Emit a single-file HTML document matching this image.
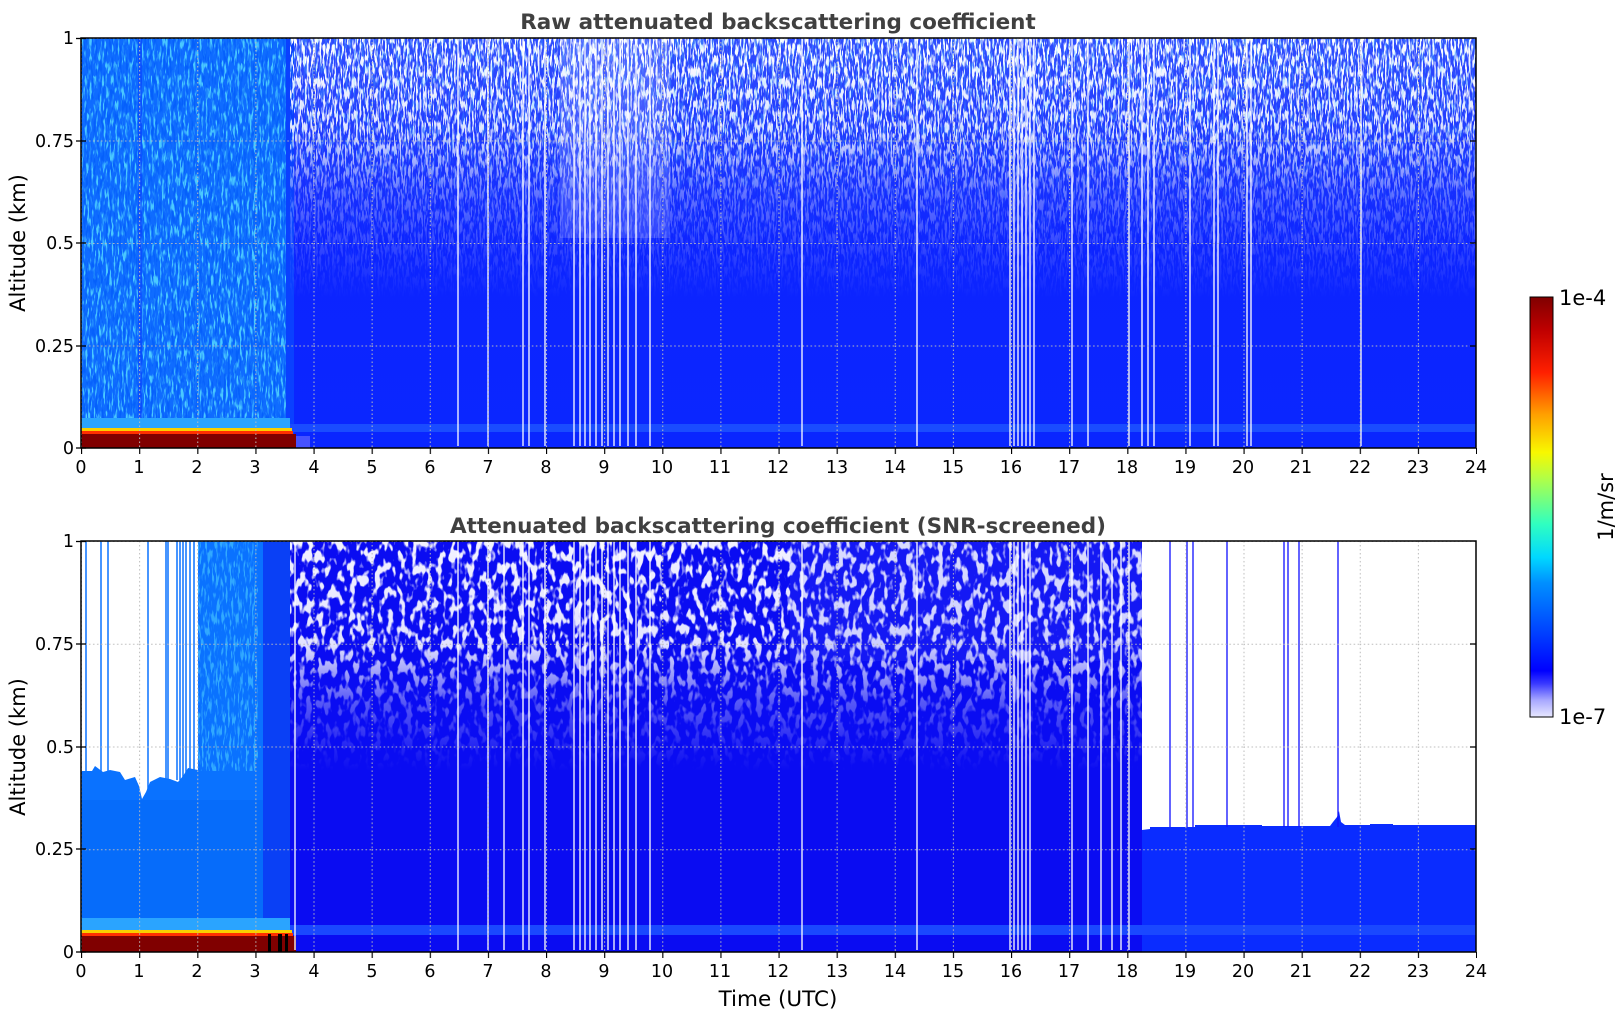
<!DOCTYPE html>
<html><head><meta charset="utf-8"><style>
html,body{margin:0;padding:0;background:#fff;}
svg{display:block;font-family:"DejaVu Sans","Liberation Sans",sans-serif;}
</style></head><body>
<svg width="1621" height="1020" viewBox="0 0 1621 1020" xmlns="http://www.w3.org/2000/svg">
<defs>
  <filter id="wn1" x="0" y="0" width="100%" height="100%">
    <feTurbulence type="fractalNoise" baseFrequency="0.55 0.09" numOctaves="2" seed="5"/>
    <feColorMatrix type="matrix" values="0 0 0 0 1  0 0 0 0 1  0 0 0 0 1  9 0 0 0 -4.3"/>
  </filter>
  <filter id="cn1" x="0" y="0" width="100%" height="100%">
    <feTurbulence type="fractalNoise" baseFrequency="0.5 0.08" numOctaves="2" seed="11"/>
    <feColorMatrix type="matrix" values="0 0 0 0 0.1  0 0 0 0 0.75  0 0 0 0 1  8 0 0 0 -4.2"/>
  </filter>
  <filter id="bn1" x="0" y="0" width="100%" height="100%">
    <feTurbulence type="fractalNoise" baseFrequency="0.5 0.08" numOctaves="2" seed="21"/>
    <feColorMatrix type="matrix" values="0 0 0 0 0  0 0 0 0 0.1  0 0 0 0 0.95  8 0 0 0 -4.0"/>
  </filter>
  <filter id="wn2" x="0" y="0" width="100%" height="100%">
    <feTurbulence type="fractalNoise" baseFrequency="0.16 0.08" numOctaves="2" seed="8"/>
    <feColorMatrix type="matrix" values="0 0 0 0 0.9  0 0 0 0 0.9  0 0 0 0 1  8 0 0 0 -4.0"/>
  </filter>
  <linearGradient id="gm1" x1="0" y1="0" x2="0" y2="1">
    <stop offset="0" stop-color="#fff"/><stop offset="0.35" stop-color="#ddd"/><stop offset="0.6" stop-color="#555"/><stop offset="1" stop-color="#000"/>
  </linearGradient>
  <mask id="m1"><rect x="290" y="38" width="1186" height="260" fill="url(#gm1)"/></mask>
  <linearGradient id="gm2" x1="0" y1="0" x2="0" y2="1">
    <stop offset="0" stop-color="#fff"/><stop offset="0.45" stop-color="#eee"/><stop offset="0.7" stop-color="#555"/><stop offset="1" stop-color="#000"/>
  </linearGradient>
  <mask id="m2"><rect x="290" y="541" width="852" height="230" fill="url(#gm2)"/></mask>
  <linearGradient id="b1" x1="0" y1="0" x2="0" y2="1">
    <stop offset="0" stop-color="#2f4cff"/><stop offset="0.5" stop-color="#0d24ff"/><stop offset="1" stop-color="#0a26ff"/>
  </linearGradient>
  <linearGradient id="cb" x1="0" y1="1" x2="0" y2="0">
    <stop offset="0" stop-color="#e8e8ff"/><stop offset="0.04" stop-color="#a8a8ff"/><stop offset="0.08" stop-color="#3838ff"/>
    <stop offset="0.11" stop-color="#0000ff"/><stop offset="0.2" stop-color="#0040ff"/><stop offset="0.32" stop-color="#0090ff"/>
    <stop offset="0.38" stop-color="#00d8ff"/><stop offset="0.46" stop-color="#30ffc0"/><stop offset="0.56" stop-color="#a8ff50"/>
    <stop offset="0.63" stop-color="#f8f800"/><stop offset="0.72" stop-color="#ffa000"/><stop offset="0.82" stop-color="#ff2000"/>
    <stop offset="0.92" stop-color="#c00000"/><stop offset="1" stop-color="#800000"/>
  </linearGradient>
  <pattern id="grid1" patternUnits="userSpaceOnUse" x="81" y="38" width="58.125" height="102.5">
    <line x1="0.5" y1="0" x2="0.5" y2="102.5" stroke="#bbb" stroke-width="1" stroke-dasharray="1.5,2.5"/>
    <line x1="0" y1="0.5" x2="58.125" y2="0.5" stroke="#bbb" stroke-width="1" stroke-dasharray="1.5,2.5"/>
  </pattern>
  <pattern id="grid2" patternUnits="userSpaceOnUse" x="81" y="541" width="58.125" height="102.75">
    <line x1="0.5" y1="0" x2="0.5" y2="102.75" stroke="#bbb" stroke-width="1" stroke-dasharray="1.5,2.5"/>
    <line x1="0" y1="0.5" x2="58.125" y2="0.5" stroke="#bbb" stroke-width="1" stroke-dasharray="1.5,2.5"/>
  </pattern>
  <pattern id="tk" patternUnits="userSpaceOnUse" x="81" y="0" width="58.125" height="10">
    <line x1="0.5" y1="0" x2="0.5" y2="10" stroke="#000" stroke-width="1.3"/>
  </pattern>
</defs>

<!-- ===== PLOT 1 ===== -->
<text x="778" y="29" text-anchor="middle" font-size="21.5" font-weight="bold" fill="#404040">Raw attenuated backscattering coefficient</text>
<rect x="81" y="38" width="1395" height="410" fill="url(#b1)"/>
<rect x="81" y="38" width="209" height="410" fill="#0f6cff"/>
<rect x="81" y="38" width="209" height="410" filter="url(#cn1)" opacity="0.8"/>
<rect x="81" y="38" width="209" height="410" filter="url(#bn1)" opacity="0.6"/>
<rect x="138" y="38" width="4" height="380" fill="#0a40ff" opacity="0.6"/>
<rect x="286" y="38" width="8" height="410" fill="#0a40ff"/>
<g mask="url(#m1)"><rect x="290" y="38" width="1186" height="260" filter="url(#wn1)"/><rect x="290" y="38" width="1186" height="260" filter="url(#cn1)" opacity="0.25"/></g>
<rect x="560" y="38" width="110" height="200" fill="#fff" opacity="0.15"/>
<rect x="290" y="424" width="1186" height="8" fill="#1a4cff"/>
<rect x="81" y="418" width="209" height="10" fill="#2aa4ff"/>
<rect x="81" y="428" width="211" height="5" fill="#f8d000"/>
<rect x="81" y="431" width="212" height="3" fill="#ff3000"/>
<rect x="81" y="434" width="215" height="14" fill="#800000"/>
<rect x="296" y="436" width="14" height="12" fill="#7070ff" opacity="0.6"/>
<g stroke="#fff" stroke-width="1.3">
<line x1="458" y1="38" x2="458" y2="446"/><line x1="488" y1="38" x2="488" y2="446"/><line x1="523" y1="38" x2="523" y2="446"/><line x1="529" y1="38" x2="529" y2="446"/><line x1="545" y1="38" x2="545" y2="446"/>
<line x1="574" y1="38" x2="574" y2="446"/><line x1="580" y1="38" x2="580" y2="446"/><line x1="585" y1="38" x2="585" y2="446"/><line x1="590" y1="38" x2="590" y2="446"/><line x1="596" y1="38" x2="596" y2="446"/><line x1="602" y1="38" x2="602" y2="446"/><line x1="608" y1="38" x2="608" y2="446"/><line x1="614" y1="38" x2="614" y2="446"/><line x1="620" y1="38" x2="620" y2="446"/><line x1="628" y1="38" x2="628" y2="446"/><line x1="636" y1="38" x2="636" y2="446"/>
<line x1="650" y1="38" x2="650" y2="446"/><line x1="802" y1="38" x2="802" y2="446"/><line x1="917" y1="38" x2="917" y2="446"/>
<line x1="1010" y1="38" x2="1010" y2="446"/><line x1="1014" y1="38" x2="1014" y2="446"/><line x1="1018" y1="38" x2="1018" y2="446"/><line x1="1022" y1="38" x2="1022" y2="446"/><line x1="1026" y1="38" x2="1026" y2="446"/><line x1="1030" y1="38" x2="1030" y2="446"/><line x1="1034" y1="38" x2="1034" y2="446"/>
<line x1="1072" y1="38" x2="1072" y2="446"/><line x1="1088" y1="38" x2="1088" y2="446"/><line x1="1129" y1="38" x2="1129" y2="446"/><line x1="1142" y1="38" x2="1142" y2="446"/><line x1="1148" y1="38" x2="1148" y2="446"/><line x1="1154" y1="38" x2="1154" y2="446"/>
<line x1="1190" y1="38" x2="1190" y2="446"/><line x1="1214" y1="38" x2="1214" y2="446"/><line x1="1218" y1="38" x2="1218" y2="446"/><line x1="1247" y1="38" x2="1247" y2="446"/><line x1="1251" y1="38" x2="1251" y2="446"/><line x1="1361" y1="38" x2="1361" y2="446"/>
</g>
<rect x="81" y="38" width="1395" height="410" fill="url(#grid1)"/>
<rect x="81" y="38" width="1395" height="410" fill="none" stroke="#000" stroke-width="1.5"/>
<rect x="81" y="448" width="1396" height="6" fill="url(#tk)"/>
<g stroke="#000" stroke-width="1.3">
<line x1="76" y1="38.5" x2="86" y2="38.5"/><line x1="76" y1="141" x2="86" y2="141"/><line x1="76" y1="243" x2="86" y2="243"/><line x1="76" y1="346" x2="86" y2="346"/><line x1="76" y1="448" x2="86" y2="448"/>
<line x1="1470" y1="141" x2="1476" y2="141"/><line x1="1470" y1="243" x2="1476" y2="243"/><line x1="1470" y1="346" x2="1476" y2="346"/>
</g>
<g font-size="17.5" text-anchor="end" fill="#000">
<text x="74" y="44">1</text><text x="74" y="147">0.75</text><text x="74" y="249">0.5</text><text x="74" y="352">0.25</text><text x="74" y="454">0</text>
</g>
<text transform="translate(25,243) rotate(-90)" text-anchor="middle" font-size="21">Altitude (km)</text>
<g font-size="17.5" text-anchor="middle">
<text x="81" y="473">0</text><text x="139" y="473">1</text><text x="197" y="473">2</text><text x="255" y="473">3</text><text x="314" y="473">4</text><text x="372" y="473">5</text><text x="430" y="473">6</text><text x="488" y="473">7</text><text x="546" y="473">8</text><text x="604" y="473">9</text><text x="662" y="473">10</text><text x="720" y="473">11</text><text x="778" y="473">12</text><text x="837" y="473">13</text><text x="895" y="473">14</text><text x="953" y="473">15</text><text x="1011" y="473">16</text><text x="1069" y="473">17</text><text x="1127" y="473">18</text><text x="1185" y="473">19</text><text x="1243" y="473">20</text><text x="1301" y="473">21</text><text x="1360" y="473">22</text><text x="1418" y="473">23</text><text x="1476" y="473">24</text>
</g>

<!-- ===== PLOT 2 ===== -->
<text x="778" y="533" text-anchor="middle" font-size="21.5" font-weight="bold" fill="#404040">Attenuated backscattering coefficient (SNR-screened)</text>
<rect x="81" y="541" width="1395" height="411" fill="#fff"/>
<rect x="290" y="541" width="852" height="411" fill="#0a0cf2"/>
<g mask="url(#m2)"><rect x="290" y="541" width="852" height="230" filter="url(#wn2)"/></g>
<rect x="790" y="541" width="352" height="120" fill="#5060ff" opacity="0.15"/>
<polygon points="81,771 92,771 95,766 103,772 110,770 120,772 125,780 135,777 139,786 142,799 146,792 150,782 160,777 170,779 178,782 183,776 188,768 198,770 198,541 290,541 290,952 81,952" fill="#0a72ff"/>
<rect x="81" y="800" width="205" height="152" fill="#0060f0" opacity="0.35"/>
<rect x="198" y="541" width="60" height="230" filter="url(#cn1)" opacity="0.5"/>
<rect x="263" y="541" width="27" height="411" fill="#0a40f5"/>
<g stroke="#0a72ff" stroke-width="1.5">
<line x1="86" y1="541" x2="86" y2="775"/><line x1="101" y1="541" x2="101" y2="775"/><line x1="108" y1="541" x2="108" y2="775"/><line x1="148" y1="541" x2="148" y2="790"/><line x1="166" y1="541" x2="166" y2="780"/><line x1="168" y1="541" x2="168" y2="780"/><line x1="177" y1="541" x2="177" y2="780"/><line x1="180" y1="541" x2="180" y2="780"/><line x1="183" y1="541" x2="183" y2="780"/><line x1="186" y1="541" x2="186" y2="780"/><line x1="190" y1="541" x2="190" y2="780"/><line x1="194" y1="541" x2="194" y2="780"/>
</g>
<polygon points="1142,952 1142,830 1150,829 1150,827 1195,827 1195,825 1262,825 1262,826 1330,826 1333,822 1337,817 1339,811 1341,822 1345,825 1370,825 1370,824 1393,824 1393,825 1476,825 1476,952" fill="#0a2cff"/>
<g stroke="#1010ff" stroke-width="1.3">
<line x1="1170" y1="541" x2="1170" y2="827"/><line x1="1187" y1="541" x2="1187" y2="827"/><line x1="1193" y1="541" x2="1193" y2="827"/><line x1="1227" y1="541" x2="1227" y2="827"/><line x1="1284" y1="541" x2="1284" y2="827"/><line x1="1288" y1="541" x2="1288" y2="827"/><line x1="1299" y1="541" x2="1299" y2="827"/><line x1="1338" y1="541" x2="1338" y2="827"/>
</g>
<rect x="290" y="925" width="1186" height="10" fill="#1a48ff"/>
<rect x="81" y="918" width="209" height="12" fill="#2aa4ff"/>
<rect x="81" y="930" width="211" height="5" fill="#f8d000"/>
<rect x="81" y="933" width="212" height="3" fill="#ff3000"/>
<rect x="81" y="936" width="215" height="16" fill="#800000"/>
<rect x="268" y="934" width="3" height="18" fill="#000"/><rect x="278" y="934" width="4" height="18" fill="#000"/><rect x="285" y="934" width="3" height="18" fill="#000"/>
<g stroke="#fff" stroke-width="1.3">
<line x1="295" y1="541" x2="295" y2="950"/><line x1="458" y1="541" x2="458" y2="950"/><line x1="488" y1="541" x2="488" y2="950"/><line x1="504" y1="541" x2="504" y2="950"/><line x1="523" y1="541" x2="523" y2="950"/><line x1="529" y1="541" x2="529" y2="950"/><line x1="545" y1="541" x2="545" y2="950"/>
<line x1="574" y1="541" x2="574" y2="950"/><line x1="580" y1="541" x2="580" y2="950"/><line x1="585" y1="541" x2="585" y2="950"/><line x1="590" y1="541" x2="590" y2="950"/><line x1="596" y1="541" x2="596" y2="950"/><line x1="602" y1="541" x2="602" y2="950"/><line x1="608" y1="541" x2="608" y2="950"/><line x1="614" y1="541" x2="614" y2="950"/><line x1="620" y1="541" x2="620" y2="950"/><line x1="628" y1="541" x2="628" y2="950"/><line x1="636" y1="541" x2="636" y2="950"/>
<line x1="650" y1="541" x2="650" y2="950"/><line x1="802" y1="541" x2="802" y2="950"/><line x1="917" y1="541" x2="917" y2="950"/>
<line x1="1010" y1="541" x2="1010" y2="950"/><line x1="1014" y1="541" x2="1014" y2="950"/><line x1="1018" y1="541" x2="1018" y2="950"/><line x1="1022" y1="541" x2="1022" y2="950"/><line x1="1026" y1="541" x2="1026" y2="950"/><line x1="1030" y1="541" x2="1030" y2="950"/>
<line x1="1072" y1="541" x2="1072" y2="950"/><line x1="1088" y1="541" x2="1088" y2="950"/><line x1="1101" y1="541" x2="1101" y2="950"/><line x1="1112" y1="541" x2="1112" y2="950"/><line x1="1121" y1="541" x2="1121" y2="950"/><line x1="1129" y1="541" x2="1129" y2="950"/>
</g>
<rect x="81" y="541" width="1395" height="411" fill="url(#grid2)"/>
<rect x="81" y="541" width="1395" height="411" fill="none" stroke="#000" stroke-width="1.5"/>
<rect x="81" y="952" width="1396" height="6" fill="url(#tk)"/>
<g stroke="#000" stroke-width="1.3">
<line x1="76" y1="541.5" x2="86" y2="541.5"/><line x1="76" y1="644" x2="86" y2="644"/><line x1="76" y1="747" x2="86" y2="747"/><line x1="76" y1="849" x2="86" y2="849"/><line x1="76" y1="952" x2="86" y2="952"/>
<line x1="1470" y1="644" x2="1476" y2="644"/><line x1="1470" y1="747" x2="1476" y2="747"/><line x1="1470" y1="849" x2="1476" y2="849"/>
</g>
<g font-size="17.5" text-anchor="end" fill="#000">
<text x="74" y="547">1</text><text x="74" y="650">0.75</text><text x="74" y="753">0.5</text><text x="74" y="855">0.25</text><text x="74" y="958">0</text>
</g>
<text transform="translate(25,747) rotate(-90)" text-anchor="middle" font-size="21">Altitude (km)</text>
<g font-size="17.5" text-anchor="middle">
<text x="81" y="977">0</text><text x="139" y="977">1</text><text x="197" y="977">2</text><text x="255" y="977">3</text><text x="314" y="977">4</text><text x="372" y="977">5</text><text x="430" y="977">6</text><text x="488" y="977">7</text><text x="546" y="977">8</text><text x="604" y="977">9</text><text x="662" y="977">10</text><text x="720" y="977">11</text><text x="778" y="977">12</text><text x="837" y="977">13</text><text x="895" y="977">14</text><text x="953" y="977">15</text><text x="1011" y="977">16</text><text x="1069" y="977">17</text><text x="1127" y="977">18</text><text x="1185" y="977">19</text><text x="1243" y="977">20</text><text x="1301" y="977">21</text><text x="1360" y="977">22</text><text x="1418" y="977">23</text><text x="1476" y="977">24</text>
</g>
<text x="778" y="1006" text-anchor="middle" font-size="21.5">Time (UTC)</text>

<rect x="1530" y="297" width="23" height="420" fill="url(#cb)" stroke="#000" stroke-width="1"/>
<text x="1559" y="305" font-size="21">1e-4</text>
<text x="1559" y="724" font-size="21">1e-7</text>
<text transform="translate(1613,507) rotate(-90)" text-anchor="middle" font-size="21">1/m/sr</text>
</svg>
</body></html>
